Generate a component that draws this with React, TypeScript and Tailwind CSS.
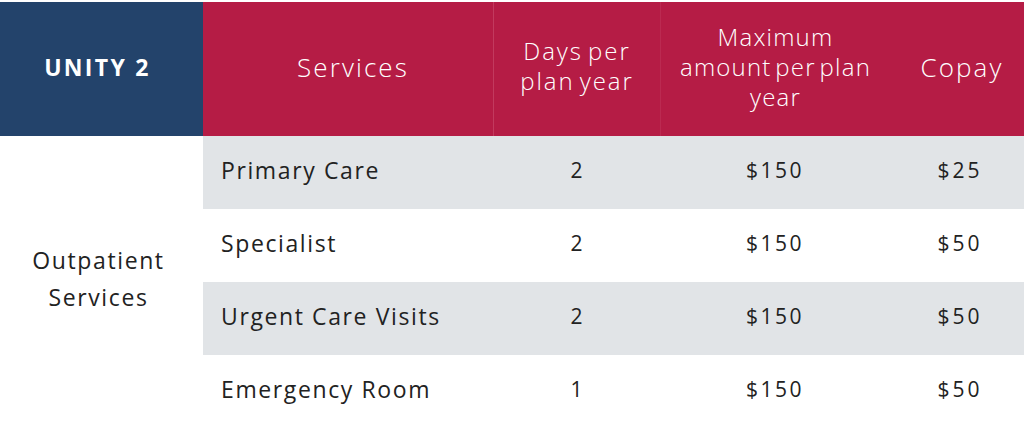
import React from 'react';

const rows = [
  { service: 'Primary Care', days: '2', max: '$150', copay: '$25', shaded: true },
  { service: 'Specialist', days: '2', max: '$150', copay: '$50', shaded: false },
  { service: 'Urgent Care Visits', days: '2', max: '$150', copay: '$50', shaded: true },
  { service: 'Emergency Room', days: '1', max: '$150', copay: '$50', shaded: false },
];

export default function App() {
  return (
    <div
      className="w-[1024px] h-[425px] bg-white pt-[2px] overflow-hidden text-[#222]"
      style={{ fontFamily: '"Open Sans", "Noto Sans", sans-serif' }}
    >
      <div className="grid grid-cols-[203px_290px_167px_230px_1fr] grid-rows-[134px_73px_73px_73px_73px]">
        {/* header */}
        <div className="bg-[#23436b] flex items-center justify-center pb-[3px] pr-[8px] text-white font-bold text-[23px] tracking-[0.1em]">
          UNITY 2
        </div>
        <div className="bg-[#b51c45] flex items-center justify-center pb-[4px] pl-[10px] text-white text-[26px] font-light tracking-[0.08em]">
          Services
        </div>
        <div className="bg-[#b51c45] border-l border-[#c23a5e] flex items-center justify-center pb-[6px] text-center text-white text-[24px] font-light leading-[30px] tracking-[0.08em] [word-spacing:-0.12em]">
          Days per
          <br />
          plan year
        </div>
        <div className="bg-[#b51c45] border-l border-[#bb2a51] flex items-center justify-center pb-[4px] text-center text-white text-[24px] font-light leading-[30px] tracking-[0.05em] [word-spacing:-0.15em]">
          Maximum
          <br />
          amount per plan
          <br />
          year
        </div>
        <div className="bg-[#b51c45] flex items-center justify-center pb-[4px] pl-[10px] text-white text-[26px] font-light tracking-[0.08em]">
          Copay
        </div>

        {/* body */}
        <div className="row-span-4 flex items-center justify-center pb-[6px] pr-[6px] text-center text-[23px] leading-[37px] tracking-[0.07em]">
          Outpatient
          <br />
          Services
        </div>
        {rows.map((r) => (
          <React.Fragment key={r.service}>
            <div
              className={`${r.shaded ? 'bg-[#e1e4e7]' : ''} flex items-center pl-[18px] pb-[4px] text-[23px] tracking-[0.07em]`}
            >
              {r.service}
            </div>
            <div className={`${r.shaded ? 'bg-[#e1e4e7]' : ''} flex items-center justify-center pb-[4px] text-[21px]`}>
              {r.days}
            </div>
            <div className={`${r.shaded ? 'bg-[#e1e4e7]' : ''} flex items-center justify-center pb-[4px] text-[21px] tracking-[0.12em]`}>
              {r.max}
            </div>
            <div className={`${r.shaded ? 'bg-[#e1e4e7]' : ''} flex items-center justify-center pb-[4px] pl-[6px] text-[21px] tracking-[0.14em]`}>
              {r.copay}
            </div>
          </React.Fragment>
        ))}
      </div>
    </div>
  );
}
